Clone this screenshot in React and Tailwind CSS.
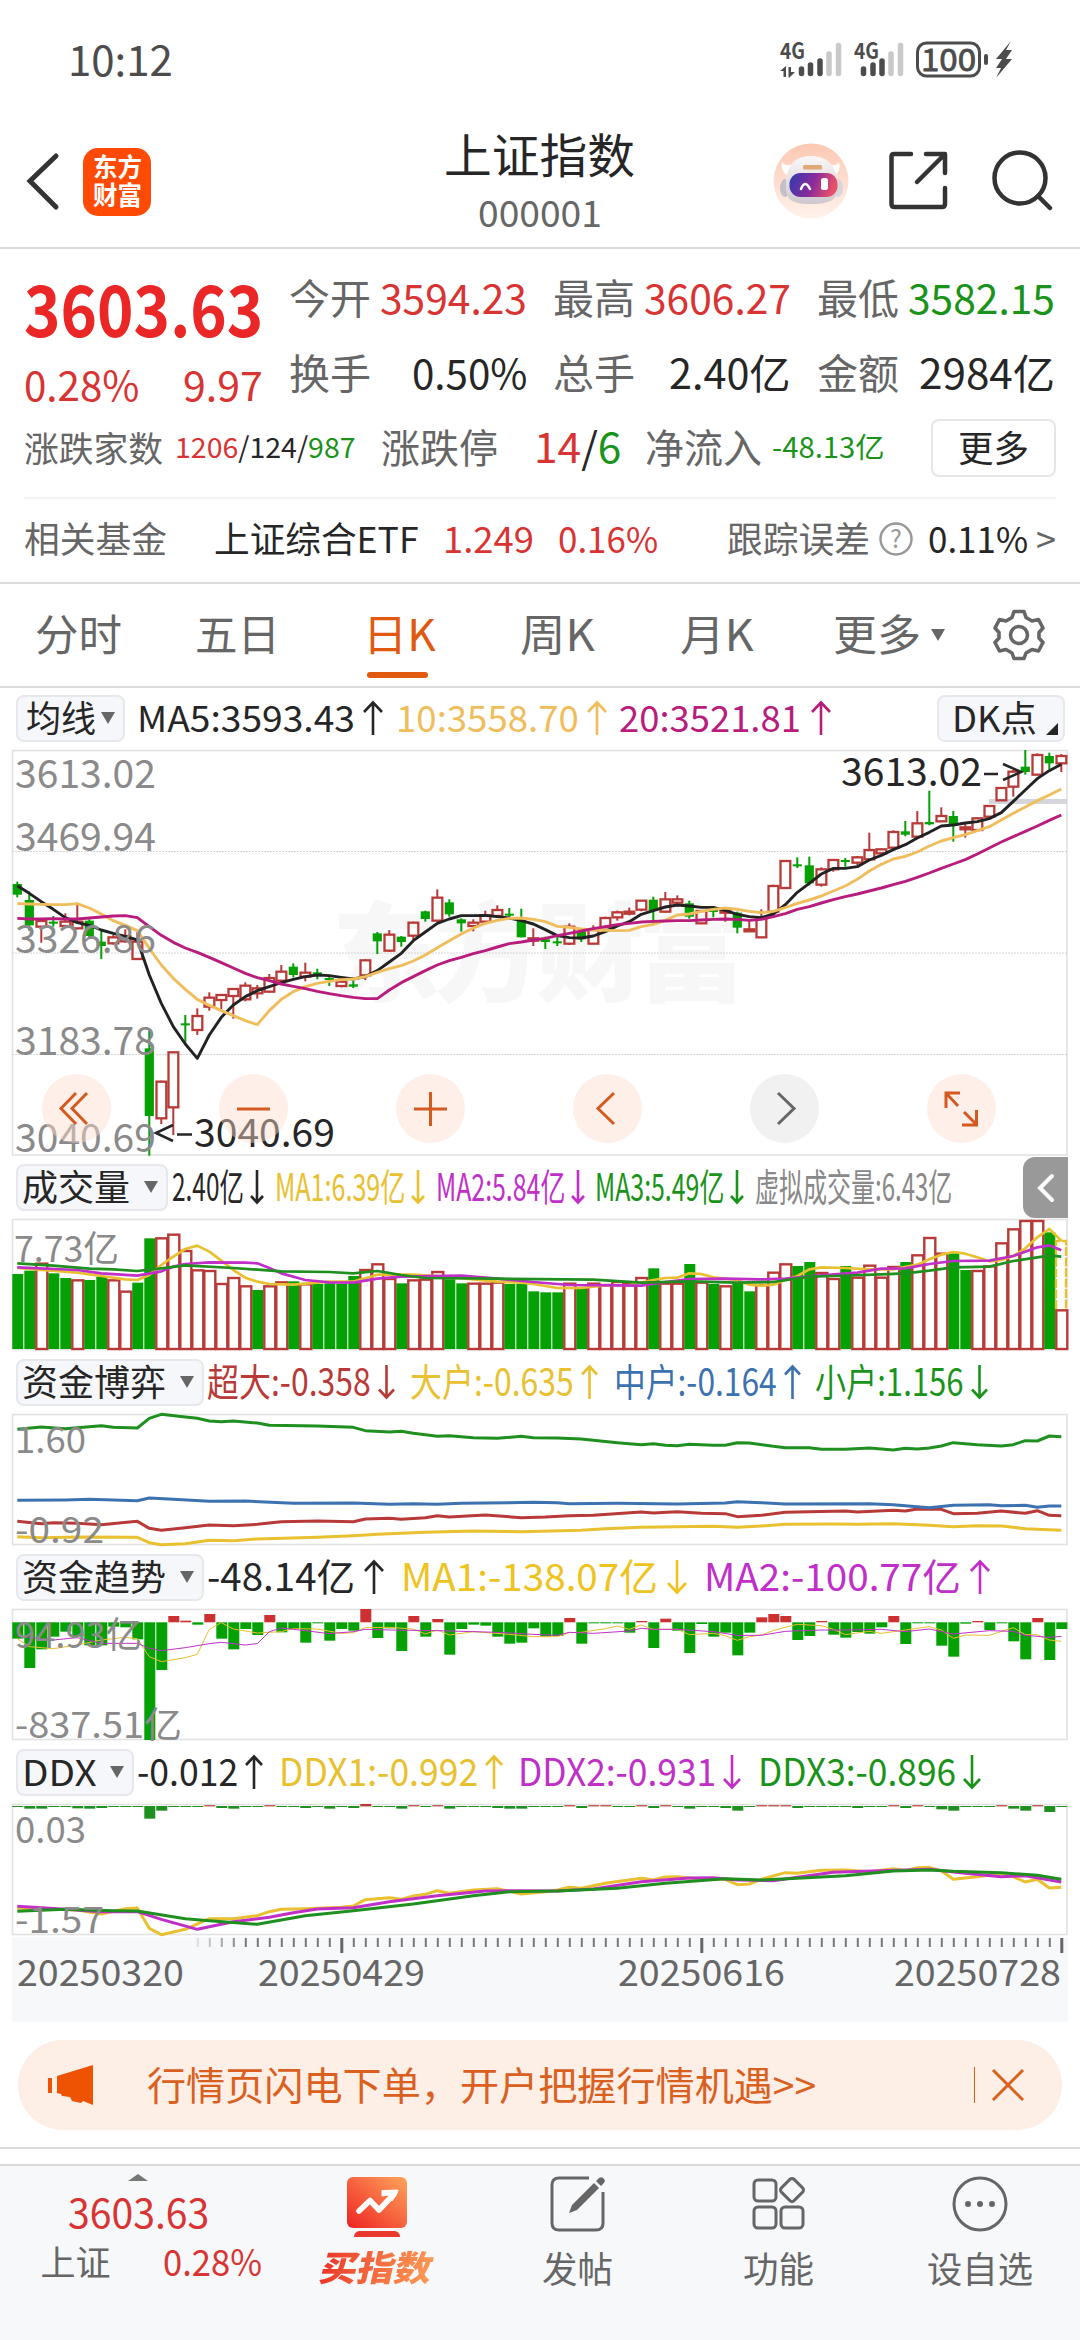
import React, { useLayoutEffect, useRef, useState } from 'react';

const RED = '#b83a38';
const GREEN = '#04a004';
const YELLOW = '#e8c030';
const PURPLE = '#c030c8';
const DEEP_GREEN = '#1f8f1f';
const BLUE = '#3d72b0';

const STEP = 12;
const FIRST_X = 17.3;
const px = (i) => FIRST_X + i * STEP;

// 文字按给定宽度横向压缩，保持一行
const Fit = ({ w, className = '', children }) => {
  const ref = useRef(null);
  const [scale, setScale] = useState(1);

  useLayoutEffect(() => {
    if (ref.current && ref.current.offsetWidth) {
      setScale(w / ref.current.offsetWidth);
    }
  }, [w, children]);

  return (
    <span className={`block shrink-0 leading-none whitespace-nowrap ${className}`} style={{ width: w }}>
      <span
        ref={ref}
        className="inline-block origin-left"
        style={{ transform: `translateY(-0.06em) scaleX(${scale})` }}
      >
        {children}
      </span>
    </span>
  );
};

// [涨跌, 最高, 实体上沿, 实体下沿, 最低]
const candles = [
  ['g', 425, 432, 464, 472], ['g', 455, 480, 556, 572], ['r', 535, 543, 560, 608], ['g', 528, 545, 548, 560],
  ['r', 520, 545, 558, 562], ['r', 492, 545, 565, 568], ['g', 538, 542, 588, 592], ['g', 570, 605, 618, 657],
  ['r', 585, 592, 610, 614], ['r', 568, 588, 604, 608], ['r', 575, 605, 657, 657], ['g', 873, 925, 1128, 1247],
  ['r', 1022, 1025, 1135, 1152], ['r', 935, 937, 1102, 1185], ['g', 825, 850, 856, 908], ['r', 805, 828, 870, 885],
  ['r', 757, 773, 800, 812], ['r', 762, 765, 780, 808], ['r', 745, 747, 768, 836], ['r', 727, 737, 778, 784],
  ['r', 735, 745, 760, 776], ['r', 702, 714, 755, 758], ['r', 675, 695, 722, 725], ['g', 670, 680, 705, 712],
  ['r', 668, 698, 710, 724], ['g', 686, 697, 703, 718], ['g', 710, 714, 720, 738], ['r', 720, 725, 738, 742],
  ['g', 722, 733, 740, 744], ['r', 658, 661, 706, 720], ['g', 576, 580, 604, 642], ['r', 570, 584, 632, 636],
  ['g', 588, 590, 606, 620], ['r', 545, 548, 587, 600], ['g', 512, 514, 537, 545], ['r', 448, 473, 542, 545],
  ['g', 478, 487, 523, 530], ['g', 535, 538, 550, 575], ['r', 538, 548, 558, 574], ['r', 512, 526, 545, 548],
  ['r', 496, 510, 528, 532], ['g', 504, 521, 526, 530], ['g', 506, 540, 592, 592], ['r', 565, 595, 602, 618],
  ['g', 590, 598, 606, 627], ['g', 590, 604, 610, 618], ['r', 550, 560, 611, 615], ['g', 570, 573, 598, 606],
  ['r', 556, 570, 611, 611], ['r', 530, 534, 562, 564], ['r', 512, 517, 532, 542], ['r', 503, 515, 519, 526],
  ['r', 480, 482, 509, 514], ['g', 470, 479, 512, 555], ['r', 456, 478, 515, 518], ['r', 466, 478, 488, 500],
  ['g', 482, 490, 530, 536], ['r', 510, 513, 550, 550], ['g', 498, 508, 516, 532], ['r', 508, 512, 518, 545],
  ['g', 515, 518, 563, 580], ['r', 540, 568, 573, 573], ['r', 508, 536, 592, 594], ['r', 434, 438, 515, 520],
  ['r', 360, 363, 444, 446], ['g', 352, 373, 378, 384], ['g', 350, 376, 430, 436], ['r', 382, 388, 434, 440],
  ['r', 358, 360, 388, 395], ['g', 354, 360, 366, 380], ['r', 348, 352, 368, 375], ['r', 278, 330, 358, 362],
  ['r', 326, 328, 340, 345], ['r', 271, 276, 323, 330], ['g', 243, 274, 284, 289], ['r', 213, 250, 290, 294],
  ['g', 152, 246, 253, 256], ['r', 202, 228, 244, 246], ['g', 213, 228, 256, 305], ['r', 248, 262, 268, 293],
  ['r', 232, 235, 270, 272], ['r', 195, 198, 230, 234], ['r', 142, 144, 181, 183], ['r', 90, 95, 140, 170],
  ['g', 30, 80, 96, 104], ['r', 40, 45, 104, 104], ['g', 38, 48, 70, 88], ['r', 42, 48, 70, 96],
];

const ma5 = [
  437, 460, 485, 508, 533, 548, 556, 570, 580, 589, 600, 705, 790, 860, 912, 955, 885, 832, 795, 770, 752, 740,
  728, 718, 710, 705, 707, 712, 717, 710, 692, 666, 640, 602, 576, 550, 537, 527, 527, 526, 530, 534, 542, 552,
  569, 587, 593, 594, 588, 575, 558, 545, 523, 512, 501, 495, 498, 502, 502, 511, 523, 530, 533, 522, 494, 457,
  430, 402, 385, 385, 380, 360, 346, 329, 314, 294, 277, 258, 255, 249, 245, 236, 218, 184, 150, 116, 92, 73,
];
const ma10 = [
  491, 492, 493, 494, 494, 491, 504, 522, 542, 556, 572, 625, 675, 715, 748, 778, 796, 812, 827, 842, 854, 812,
  778, 755, 740, 730, 724, 719, 717, 710, 697, 686, 677, 663, 645, 623, 602, 582, 564, 550, 541, 535, 534, 538,
  545, 559, 562, 567, 570, 571, 572, 571, 560, 553, 541, 525, 522, 514, 508, 504, 508, 514, 518, 514, 503, 490,
  480, 468, 453, 438, 418, 393, 373, 357, 349, 336, 318, 303, 293, 284, 272, 260, 240, 220, 201, 182, 165, 147,
];
const ma20 = [
  535, 537, 537, 536, 537, 537, 534, 531, 528, 527, 533, 560, 586, 607, 624, 637, 652, 668, 684, 700, 713, 722,
  732, 739, 746, 754, 761, 767, 772, 776, 776, 750, 728, 710, 692, 675, 662, 652, 641, 632, 621, 611, 606, 600,
  595, 587, 580, 573, 566, 560, 554, 550, 546, 544, 543, 542, 542, 540, 538, 537, 538, 541, 538, 530, 521, 508,
  500, 489, 479, 470, 462, 453, 444, 434, 424, 412, 399, 385, 372, 359, 342, 324, 306, 290, 274, 258, 241, 225,
];

const volumes =
  'g372 g362 r338 g370 g384 r388 g390 g380 r388 r422 g398 g265 r262 r251 r300 r358 r360 r399 r381 r406 g420 r406 r394 g394 r400 g402 g400 g402 g378 r357 r340 r384 g400 r388 r386 r363 g388 g400 r398 r398 r395 g402 g402 g424 g427 g427 r398 g412 r398 r402 r393 r398 r381 g355 r398 r398 g342 r395 g402 r406 g398 g424 r402 r365 r340 g348 g336 r366 r384 g348 r380 r344 r380 r348 g336 r313 r261 r308 g310 g360 r360 r346 r277 r235 r210 r210 g247 r478'
    .split(' ')
    .map((s) => [s[0], Number(s.slice(1))]);

const trends =
  'g296 g384 g328 g290 g275 g290 g316 g316 g260 g262 g298 g600 g390 r228 r242 g254 r222 g296 g328 g267 g285 r225 g277 g267 g308 g250 g302 g267 g272 r207 g294 g265 g333 r228 g290 r237 g344 g267 g254 g257 g290 g311 g308 g265 g290 g288 r234 g311 g250 g250 g250 g278 r243 g324 r236 g272 g339 g252 g290 g278 g346 g278 r232 r222 r228 g300 g288 r243 g284 g293 g276 g281 g262 r228 g312 g250 g250 g317 g350 g251 r243 g270 g250 g304 g358 r234 g360 g267'
    .split(' ')
    .map((s) => [s[0], Number(s.slice(1))]);

const ddxDeep = {
  1: 806, 2: 806, 5: 805, 6: 806, 7: 804, 11: 836, 12: 812, 17: 804, 18: 806, 24: 804, 26: 806, 28: 804, 32: 806,
  36: 806, 40: 804, 41: 806, 42: 806, 47: 804, 53: 804, 56: 806, 59: 804, 60: 812, 65: 804, 70: 804, 74: 804,
  77: 808, 78: 812, 83: 806, 84: 812, 86: 816,
};
const ddxUp = [16, 21, 29, 33, 35, 46, 48, 49, 52, 54, 62, 63, 64, 73, 75, 82, 85];

const volumeLines = [
  [YELLOW, '0:354 5:368 7:378 9:388 10:390 11:375 12:345 13:320 14:297 15:287 16:305 17:332 18:360 19:383 20:395 21:402 23:404 26:395 28:395 29:385 30:374 33:374 35:378 38:388 40:395 42:398 43:402 44:408 45:414 47:414 49:406 51:405 53:390 54:384 55:383 56:370 57:372 58:382 60:390 61:404 62:407 63:404 64:390 65:378 66:358 67:352 69:354 71:358 73:358 75:344 76:328 77:314 78:306 79:311 80:322 81:334 82:330 83:318 84:295 85:262 86:237 87:272'],
  [PURPLE, '0:352 5:360 7:370 10:377 12:364 13:350 14:342 16:337 19:338 20:340 21:354 22:370 24:390 26:397 28:398 30:386 32:380 37:377 40:386 43:396 46:405 50:406 52:407 54:396 56:387 59:386 62:388 64:386 67:376 70:368 72:356 74:355 76:342 78:333 81:332 83:318 85:292 86:286 87:301'],
  [DEEP_GREEN, '0:340 3:347 6:356 8:358 10:363 12:355 14:346 18:354 22:364 26:366 28:370 30:363 32:375 34:384 40:386 48:389 52:398 56:394 60:398 63:396 66:380 68:378 72:373 74:370 76:362 78:352 81:350 83:333 85:322 86:317 87:320'],
];
const gameLines = [
  [DEEP_GREEN, '0:838 2:831 4:836 7:827 8:832 10:834 11:805 12:793 14:801 15:805 16:813 17:815 18:813 20:819 21:826 25:828 28:832 29:842 31:846 32:844 33:850 34:854 35:859 36:857 38:863 40:865 42:859 43:863 45:864 47:867 50:878 52:884 53:881 54:886 55:887 56:883 58:886 59:886 60:878 61:879 63:889 64:893 66:893 67:898 69:898 71:894 73:900 74:895 75:897 76:894 77:888 78:878 80:884 82:888 83:884 84:872 85:873 86:858 87:860'],
  [YELLOW, '0:1160 2:1163 5:1161 10:1162 11:1178 12:1184 14:1181 16:1171 18:1172 20:1167 25:1162 28:1157 30:1153 34:1147 38:1143 42:1145 47:1141 49:1136 52:1132 55:1130 58:1129 60:1132 62:1128 64:1123 68:1122 70:1123 73:1121 76:1126 78:1130 80:1127 82:1128 84:1136 87:1141'],
  [RED, '0:1114 2:1121 3:1118 5:1120 7:1124 10:1114 11:1135 12:1141 14:1133 16:1125 18:1127 20:1123 22:1115 25:1113 28:1115 29:1107 31:1105 32:1108 34:1103 35:1097 36:1101 39:1095 42:1103 44:1101 46:1097 48:1096 52:1086 53:1089 55:1085 57:1090 59:1091 60:1100 62:1096 64:1087 66:1085 69:1083 70:1086 73:1081 74:1083 75:1077 77:1078 78:1091 80:1090 82:1083 84:1090 85:1082 86:1096 87:1097'],
  [BLUE, '0:1051 4:1050 6:1048 10:1052 11:1044 13:1048 16:1054 19:1053 23:1060 28:1059 31:1063 33:1061 35:1063 37:1060 43:1057 45:1058 46:1061 50:1060 55:1062 59:1059 60:1055 62:1058 64:1062 71:1061 73:1064 75:1070 76:1073 78:1066 81:1064 82:1067 84:1066 85:1072 86:1068 87:1068'],
];
const trendLines = [
  [YELLOW, '0:296 1:320 3:326 5:315 7:300 9:292 10:296 11:350 12:365 14:353 15:343 16:268 17:248 18:267 20:279 22:275 23:266 25:267 27:280 28:278 29:263 31:262 33:267 34:282 35:270 36:285 38:275 41:283 43:290 45:290 46:278 47:277 49:266 50:258 51:268 52:255 53:268 55:268 56:284 58:280 59:287 60:301 61:290 62:285 63:272 64:262 65:253 67:257 68:268 69:284 71:274 72:280 74:270 76:260 77:270 78:295 79:285 81:286 83:263 84:284 85:284 86:300 87:304'],
  [PURPLE, '0:288 3:300 5:293 7:310 10:310 11:325 12:332 14:323 16:311 17:307 19:315 20:311 21:275 22:264 24:272 26:281 28:275 29:268 31:270 35:272 40:277 43:283 45:286 46:277 48:280 51:273 52:265 53:268 55:268 58:275 60:286 62:286 64:274 67:270 69:270 72:268 74:275 76:267 78:282 81:272 83:274 84:286 86:292 87:289'],
];
const ddxLines = [
  [YELLOW, '0:1105 5:1110 7:1122 9:1106 10:1104 11:1165 12:1184 14:1168 16:1136 18:1136 20:1127 21:1115 22:1108 24:1106 27:1102 28:1098 29:1079 31:1073 32:1078 33:1068 34:1063 35:1052 36:1060 38:1050 40:1046 42:1062 44:1055 45:1050 46:1042 47:1045 49:1030 52:1015 53:1020 54:1011 55:1010 57:1018 59:1018 60:1034 61:1032 62:1018 64:998 65:1000 67:991 69:990 71:995 73:986 74:992 75:983 76:982 77:992 78:1018 80:1010 82:1000 83:1010 84:1026 85:1018 86:1044 87:1042'],
  [PURPLE, '0:1099 4:1108 7:1115 10:1115 12:1138 15:1168 18:1145 21:1132 23:1118 25:1107 28:1103 31:1085 35:1067 39:1053 42:1052 45:1053 48:1047 52:1025 56:1014 58:1013 60:1020 63:1022 65:1012 68:997 72:992 76:988 79:1000 82:1010 84:1007 87:1026'],
  [DEEP_GREEN, '0:1114 4:1108 8:1112 10:1113 14:1136 16:1142 20:1153 24:1127 28:1112 33:1092 38:1067 41:1055 45:1053 50:1045 54:1030 59:1016 62:1020 65:1015 69:1007 73:993 76:990 78:994 82:998 85:1006 87:1018'],
];

const linePoints = (spec, top) =>
  spec
    .split(' ')
    .map((p) => p.split(':').map(Number))
    .map(([i, v]) => `${px(i)},${(v - top) / 3}`)
    .join(' ');

const Lines = ({ lines, top, width = 3 }) =>
  lines.map(([color, spec]) => (
    <polyline key={spec} points={linePoints(spec, top)} fill="none" stroke={color} strokeWidth={width} strokeLinejoin="round" />
  ));

const AxisText = ({ x, y, w, size = 36, color = '#8a8a8a', children }) => (
  <text x={x} y={y} textLength={w} lengthAdjust="spacingAndGlyphs" fontSize={size} fill={color}>
    {children}
  </text>
);

const Frame = ({ height }) => (
  <rect x="12.5" y="0.5" width="1054.5" height={height} fill="none" stroke="#e2e2e2" strokeWidth="1.6" />
);

const KLineChart = () => {
  const y = (v) => (v - 30) / 3;
  const path = (arr) => arr.map((v, i) => `${px(i)},${y(v)}`).join(' ');
  return (
    <svg width="1080" height="405" viewBox="0 0 1080 405" className="block overflow-visible">
      <text x="332" y="243" textLength="414" fontSize="108" fontWeight="900" fill="#f7f7f7">东方财富</text>
      <Frame height={404.5} />
      {[101.5, 203, 304.5].map((gy) => (
        <line key={gy} x1="12" x2="1067" y1={gy} y2={gy} stroke="#d4d4d4" strokeDasharray="2 1" />
      ))}
      <rect x="989" y="49" width="78" height="5" fill="#d4d6db" />
      {candles.map(([kind, high, top, bottom, low], i) => {
        const h = Math.max((bottom - top) / 3, 2);
        if (kind === 'g') {
          return (
            <g key={i} fill={GREEN}>
              <rect x={px(i) - 1} y={y(high)} width="2" height={(low - high) / 3} />
              <rect x={px(i) - 4.6} y={y(top)} width="9.2" height={h} />
            </g>
          );
        }
        return (
          <g key={i} fill={RED}>
            <rect x={px(i) - 1} y={y(high)} width="2" height={(top - high) / 3} />
            <rect x={px(i) - 1} y={y(bottom)} width="2" height={(low - bottom) / 3} />
            <rect x={px(i) - 4.8} y={y(top)} width="9.8" height={h} fill="none" stroke={RED} strokeWidth="2.3" />
          </g>
        );
      })}
      <polyline points={path(ma5)} fill="none" stroke="#222222" strokeWidth="2.9" strokeLinejoin="round" />
      <polyline points={path(ma10)} fill="none" stroke="#f0bd5c" strokeWidth="2.9" strokeLinejoin="round" />
      <polyline points={path(ma20)} fill="none" stroke="#b81c7c" strokeWidth="2.9" strokeLinejoin="round" />
      <AxisText x={15} y={38} w={141} size={39}>3613.02</AxisText>
      <AxisText x={15} y={101} w={141} size={39}>3469.94</AxisText>
      <AxisText x={15} y={203} w={141} size={39}>3326.86</AxisText>
      <AxisText x={15} y={305} w={141} size={39}>3183.78</AxisText>
      <AxisText x={15} y={402} w={141} size={39}>3040.69</AxisText>
      <AxisText x={194} y={397} w={141} size={39} color="#262626">3040.69</AxisText>
      <path d="M173 375 L156 383 L173 391 M177 384.5 H192" fill="none" stroke="#262626" strokeWidth="2.6" />
      <AxisText x={841} y={36} w={141} size={39} color="#262626">3613.02</AxisText>
      <path d="M984 24 H998 M1003 14 L1021 22 L1003 30" fill="none" stroke="#262626" strokeWidth="2.6" />
    </svg>
  );
};

const controls = [
  { key: 'fast', d: 'M34 19 L19 34.5 L34 50 M45 19 L30 34.5 L45 50' },
  { key: 'minus', d: 'M18 35 H51' },
  { key: 'plus', d: 'M18 35 H51 M34.5 18 V52' },
  { key: 'prev', d: 'M41 19 L25 34.5 L41 50' },
  { key: 'next', d: 'M28 19 L44 34.5 L28 50', muted: true },
  { key: 'full', d: 'M33 19 H19 V34 M19 19 L31 32 M37 38 L49 50 M35 51 H49.5 V36' },
];

const ChartControls = () => (
  <div className="absolute top-[324px] left-[42px] flex gap-[108px]">
    {controls.map(({ key, d, muted }) => (
      <button
        key={key}
        className={`h-[69px] w-[69px] rounded-full ${muted ? 'bg-[#f0f0f0]/90' : 'bg-[#fcdccb]/45'}`}
      >
        <svg width="69" height="69" viewBox="0 0 69 69" fill="none" stroke={muted ? '#666666' : '#d35b22'} strokeWidth="3">
          <path d={d} />
        </svg>
      </button>
    ))}
  </div>
);

const VolumeChart = () => {
  const y = (v) => (v - 207) / 3;
  return (
    <svg width="1080" height="131" viewBox="0 0 1080 131" className="block overflow-visible">
      <Frame height={130} />
      {volumes.map(([kind, top], i) =>
        kind === 'g' ? (
          <rect key={i} x={px(i) - 5} y={y(top)} width="11" height={130 - y(top)} fill={GREEN} />
        ) : (
          <rect key={i} x={px(i) - 5} y={y(top) + 1} width="11" height={129 - y(top)} fill="white" stroke={RED} strokeWidth="2.4" />
        )
      )}
      <path d="M1056 90 V22 H1066 V90" fill="none" stroke={YELLOW} strokeWidth="2.4" strokeDasharray="9 1.5" />
      <Lines lines={volumeLines} top={207} width={2.7} />
      <AxisText x={14} y={43} w={105}>7.73亿</AxisText>
    </svg>
  );
};

const GameChart = () => (
  <svg width="1080" height="131" viewBox="0 0 1080 131" className="block overflow-visible">
    <Frame height={130} />
    <Lines lines={gameLines} top={792} />
    <AxisText x={15} y={39} w={71}>1.60</AxisText>
    <AxisText x={15} y={129} w={89}>-0.92</AxisText>
  </svg>
);

const TrendChart = () => (
  <svg width="1080" height="131" viewBox="0 0 1080 131" className="block overflow-visible">
    <Frame height={130} />
    {trends.map(([kind, v], i) => {
      const zero = 13.3;
      const end = (v - 207) / 3;
      return (
        <rect
          key={i}
          x={px(i) - 5}
          y={Math.min(zero, end)}
          width="11"
          height={Math.max(Math.abs(end - zero), 1)}
          fill={kind === 'g' ? GREEN : '#cc3030'}
        />
      );
    })}
    <Lines lines={trendLines} top={207} width={1} />
    <AxisText x={15} y={39} w={127}>94.93亿</AxisText>
    <AxisText x={15} y={129} w={167}>-837.51亿</AxisText>
  </svg>
);

const DdxChart = () => (
  <svg width="1080" height="131" viewBox="0 0 1080 131" className="block overflow-visible">
    <Frame height={130} />
    {candles.map((_, i) => {
      if (ddxUp.includes(i)) {
        const h = i === 29 ? 2.4 : 1.2;
        return <rect key={i} x={px(i) - 5} y={2.4 - h} width="11" height={h} fill={RED} />;
      }
      const end = ((ddxDeep[i] || 801) - 792) / 3;
      return <rect key={i} x={px(i) - 5} y="2" width="11" height={Math.max(end - 2, 1)} fill={DEEP_GREEN} />;
    })}
    <Lines lines={ddxLines} top={792} />
    <AxisText x={15} y={39} w={71}>0.03</AxisText>
    <AxisText x={15} y={129} w={89}>-1.57</AxisText>
  </svg>
);

const Caret = ({ className = 'ml-[14px]' }) => (
  <svg width="14" height="12" viewBox="0 0 14 12" className={`shrink-0 ${className}`}>
    <path d="M0 0 H14 L7 12 Z" fill="#666666" />
  </svg>
);

// 涨跌箭头
const Arrow = ({ dir, w = 20, className = '' }) => (
  <svg
    width={w}
    height="36"
    viewBox={`0 0 ${w} 36`}
    fill="none"
    stroke="currentColor"
    strokeWidth="2.6"
    className={`shrink-0 ${className}`}
  >
    <path
      d={
        dir === 'up'
          ? `M${w / 2} 35 V3 M1 ${w / 2 + 2} L${w / 2} 2.500 L${w - 1} ${w / 2 + 2}`
          : `M${w / 2} 1 V33 M1 ${34 - w / 2} L${w / 2} 33.500 L${w - 1} ${34 - w / 2}`
      }
    />
  </svg>
);

// 指标标题行：下拉按钮 + 各项数值
const IndicatorBar = ({ label, labelWidth, values, first }) => (
  <div className="flex h-[64px] items-center pl-4 text-[38px]">
    <div className="flex h-[47px] shrink-0 items-center rounded-lg border-2 border-[#e6e8ed] bg-[#f6f7fa] pr-[8px] pl-[4px] text-[#262626]">
      <Fit w={labelWidth} className="text-[36px]">{label}</Fit>
      <Caret />
    </div>
    <div className={`flex items-center ${first}`}>
      {values.map(({ text, w, color, arrow, gap = 'mr-[7px]', after = 'mr-[12px]', aw = 20 }) => (
        <div key={text} className={`flex items-center ${color} ${after}`}>
          <Fit w={w} className={gap}>{text}</Fit>
          {arrow && <Arrow dir={arrow} w={aw} />}
        </div>
      ))}
    </div>
  </div>
);

const BLACK_T = 'text-[#262626]';
const YELLOW_T = 'text-[#e8c030]';
const PURPLE_T = 'text-[#c030c8]';
const GREEN_T = 'text-[#1a931a]';

const StatusBar = () => (
  <header className="flex h-[120px] items-start justify-between pt-[39px] pr-[64px] pl-[68px] text-[#4c4c4c]">
    <Fit w={105} className="mt-[1px] text-[42px]">10:12</Fit>
    <svg width="236" height="42" viewBox="0 0 236 42" fill="#4c4c4c" className="overflow-visible">
      <text x="0" y="20" fontSize="22" fontWeight="700" textLength="25" lengthAdjust="spacingAndGlyphs">4G</text>
      <path d="M0 32 L6 27 V38 H3.5 V32 Z M8.5 28 H11 V33 H15 L9.5 38.5 H8.5 Z" />
      <g strokeWidth="5.5" strokeLinecap="round" stroke="#4c4c4c">
        <path d="M21.5 30 V34.500 M30.5 26 V34.500 M40 22 V34.500 M83.5 30 V34.500 M93 26 V34.500 M102 22 V34.500" />
        <path d="M49 15 V34.500 M58.5 6.500 V34.500 M111 15 V34.500 M120.5 6.500 V34.500" stroke="#c9c9c9" />
      </g>
      <text x="74" y="20" fontSize="22" fontWeight="700" textLength="25" lengthAdjust="spacingAndGlyphs">4G</text>
      <rect x="137.5" y="4" width="62" height="33" rx="9" fill="none" stroke="#4c4c4c" strokeWidth="3" />
      <text x="141" y="32" fontSize="31" stroke="#4c4c4c" strokeWidth="0.8" textLength="55" lengthAdjust="spacingAndGlyphs">100</text>
      <rect x="204" y="15" width="4" height="11" rx="2" />
      <path d="M231 2 L216 20 H222 L216 29 H221 L216 39 L232 20 H226 L232 11 H226 Z" />
    </svg>
  </header>
);

const Robot = () => (
  <svg width="76" height="76" viewBox="0 0 76 76">
    <defs>
      <linearGradient id="halo" x1="0" y1="0" x2="0" y2="1">
        <stop offset="0" stopColor="#fdc8b2" />
        <stop offset="1" stopColor="#fff3ec" />
      </linearGradient>
      <linearGradient id="visor" x1="0" y1="0" x2="1" y2="0.2">
        <stop offset="0" stopColor="#2f3bb0" />
        <stop offset="0.55" stopColor="#8a2a9a" />
        <stop offset="1" stopColor="#e8506a" />
      </linearGradient>
      <linearGradient id="shell" x1="0" y1="0" x2="0" y2="1">
        <stop offset="0" stopColor="#fbf8f8" />
        <stop offset="1" stopColor="#cdc8ce" />
      </linearGradient>
    </defs>
    <circle cx="38" cy="38" r="37.5" fill="url(#halo)" />
    <path d="M9 19 Q12 24 22 21 L15 33 Q7 28 9 19 Z M66 19 Q64 24 54 21 L61 33 Q69 28 66 19 Z" fill="#ffffff" />
    <ellipse cx="12" cy="45" rx="5" ry="9" fill="#c4c0c8" />
    <ellipse cx="65" cy="45" rx="5" ry="9" fill="#d9d5da" />
    <path d="M38 13 C54 13 63 22 65 40 C66 56 59 61 38 61 C17 61 12 56 13 40 C14 22 22 13 38 13 Z" fill="url(#shell)" />
    <rect x="30" y="22" width="19" height="4.500" rx="1.5" fill="#e0a878" />
    <rect x="16.5" y="30" width="48" height="24" rx="11" fill="url(#visor)" />
    <path d="M28 46 Q32 36 37 46" fill="none" stroke="white" strokeWidth="2.5" strokeLinecap="round" />
    <rect x="48" y="35" width="7" height="12" rx="2.5" fill="white" />
  </svg>
);

const TitleBar = () => (
  <div className="flex h-[129px] items-start justify-between border-b-2 border-[#dcdcdc] pr-[27px] pl-[26px]">
    <div className="flex w-[400px] items-center pt-[28px]">
      <svg width="36" height="62" viewBox="0 0 36 62" fill="none" stroke="#333333" strokeWidth="5" strokeLinecap="round">
        <path d="M30 5 L4 30 L30 56" />
      </svg>
      <div className="ml-[21px] flex h-[68px] w-[68px] flex-col items-center justify-center gap-[2px] rounded-[15px] bg-[#ff4a05] text-[26px] font-bold text-white">
        <Fit w={49}>东方</Fit>
        <Fit w={49}>财富</Fit>
      </div>
    </div>
    <div className="flex flex-col items-center pt-[12px]">
      <Fit w={191} className="text-[47px] text-[#262626]">上证指数</Fit>
      <Fit w={124} className="mt-[16px] text-[36px] text-[#666666]">000001</Fit>
    </div>
    <div className="flex w-[400px] items-center justify-end pt-[23px]">
      <Robot />
      <svg width="60" height="60" viewBox="0 0 60 60" fill="none" stroke="#333333" strokeWidth="4.5" strokeLinecap="round" strokeLinejoin="round" className="ml-[40px]">
        <path d="M22 3 H5 Q2.5 3 2.5 5.500 V53 Q2.5 56 5.5 56 H53 Q56 56 56 53 V37 M37 3 H56 V22 M55 4 L28 31" />
      </svg>
      <svg width="62" height="62" viewBox="0 0 62 62" fill="none" stroke="#333333" strokeWidth="4.5" strokeLinecap="round" className="ml-[42px]">
        <circle cx="29" cy="28" r="25.5" />
        <path d="M47 46 L59 58" />
      </svg>
    </div>
  </div>
);

const Stat = ({ label, value, w, color }) => (
  <div className="flex w-[238px] items-center justify-between">
    <Fit w={82} className="text-[41px] text-[#666666]">{label}</Fit>
    <Fit w={w} className={`text-[41px] ${color}`}>{value}</Fit>
  </div>
);

const Quote = () => (
  <section className="flex h-[333px] flex-col px-[24px]">
    <div className="flex h-[163px]">
      <div className="flex w-[265px] flex-col pt-[26px]">
        <Fit w={239} className="text-[71px] font-bold text-[#eb2626]">3603.63</Fit>
        <div className="mt-[19px] flex w-[239px] justify-between text-[41px] text-[#d83434]">
          <Fit w={115}>0.28%</Fit>
          <Fit w={80}>9.97</Fit>
        </div>
      </div>
      <div className="flex flex-col gap-[34px] pt-[29px]">
        <div className="flex gap-[26px]">
          <Stat label="今开" value="3594.23" w={147} color="text-[#d83434]" />
          <Stat label="最高" value="3606.27" w={147} color="text-[#d83434]" />
          <Stat label="最低" value="3582.15" w={147} color={GREEN_T} />
        </div>
        <div className="flex gap-[26px]">
          <Stat label="换手" value="0.50%" w={115} color={BLACK_T} />
          <Stat label="总手" value="2.40亿" w={122} color={BLACK_T} />
          <Stat label="金额" value="2984亿" w={136} color={BLACK_T} />
        </div>
      </div>
    </div>
    <div className="flex h-[87px] items-start border-b-2 border-[#f4f4f4] pt-[7px]">
      <div className="flex h-[58px] items-center text-[#666666]">
        <Fit w={139} className="text-[35px]">涨跌家数</Fit>
        <Fit w={181} className="ml-[12px] text-[28.5px] text-[#262626]">
          <span className="text-[#d83434]">1206</span>/124/<span className={GREEN_T}>987</span>
        </Fit>
        <Fit w={117} className="ml-[25px] text-[40px]">涨跌停</Fit>
        <Fit w={87} className="ml-[36px] text-[42px] text-[#262626]">
          <span className="text-[#d83434]">14</span>/<span className={GREEN_T}>6</span>
        </Fit>
        <Fit w={117} className="ml-[24px] text-[40px]">净流入</Fit>
        <Fit w={113} className={`ml-[10px] text-[28px] ${GREEN_T}`}>-48.13亿</Fit>
      </div>
      <button className="ml-auto flex h-[58px] w-[125px] items-center justify-center rounded-lg border-2 border-[#e6e6e6] text-[#262626]">
        <Fit w={71} className="text-[36px]">更多</Fit>
      </button>
    </div>
    <div className="flex flex-1 items-center pb-[4px] text-[36px] text-[#666666]">
      <Fit w={143}>相关基金</Fit>
      <Fit w={205} className={`ml-[47px] ${BLACK_T}`}>上证综合ETF</Fit>
      <Fit w={91} className="ml-[24px] text-[#d83434]">1.249</Fit>
      <Fit w={100} className="ml-[24px] text-[#d83434]">0.16%</Fit>
      <Fit w={143} className="ml-[69px]">跟踪误差</Fit>
      <svg width="34" height="34" viewBox="0 0 34 34" className="ml-[9px] overflow-visible">
        <circle cx="17" cy="17" r="15.5" fill="none" stroke="#999999" strokeWidth="2.5" />
        <text x="17" y="26" fontSize="25" textAnchor="middle" fill="#999999">?</text>
      </svg>
      <Fit w={100} className={`ml-[15px] ${BLACK_T}`}>0.11%</Fit>
      <Fit w={20} className="ml-[8px]">&gt;</Fit>
    </div>
  </section>
);

const Tabs = () => (
  <nav className="flex h-[106px] items-center border-y-2 border-[#dcdcdc] pl-[35px] text-[43px] text-[#666666]">
    <Fit w={87}>分时</Fit>
    <Fit w={85} className="ml-[73px]">五日</Fit>
    <div className="relative ml-[83px] text-[#e0590f]">
      <Fit w={73}>日K</Fit>
      <span className="absolute top-[58px] left-[4px] h-[6px] w-[61px] rounded-full bg-[#e0590f]" />
    </div>
    <Fit w={75} className="ml-[84px]">周K</Fit>
    <Fit w={74} className="ml-[85px]">月K</Fit>
    <Fit w={88} className="ml-[79px]">更多</Fit>
    <Caret className="ml-[10px]" />
    <svg width="54" height="54" viewBox="0 0 54 54" fill="none" stroke="#666666" strokeWidth="3.6" strokeLinejoin="round" className="ml-[47px]">
      <path d="M22 3.5 H32 L34 9.5 L40 13 L46.5 11.5 L51 20 L47 24.5 V30 L51 34.5 L46.5 43 L40 41.5 L34 45 L32 50.5 H22 L20 45 L14 41.5 L7.5 43 L3 34.5 L7 30 V24.5 L3 20 L7.5 11.5 L14 13 L20 9.5 Z" />
      <circle cx="27" cy="27" r="8.5" />
    </svg>
  </nav>
);

const AverageBar = () => (
  <div className="flex h-[63px] items-center pr-[15px] pb-[3px] pl-4 text-[36px]">
    <div className="flex h-[47px] w-[109px] shrink-0 items-center rounded-lg border-2 border-[#e6e8ed] bg-[#f6f7fa] pl-[8px] text-[#262626]">
      <Fit w={70}>均线</Fit>
      <Caret className="ml-[5px]" />
    </div>
    <Fit w={218} className="ml-[12px] text-[#262626]">MA5:3593.43</Fit>
    <Arrow dir="up" w={20} className="ml-[8px] text-[#262626]" />
    <Fit w={183} className="ml-[13px] text-[#f0bd5c]">10:3558.70</Fit>
    <Arrow dir="up" w={20} className="ml-[8px] text-[#f0bd5c]" />
    <Fit w={182} className="ml-[12px] text-[#b81c7c]">20:3521.81</Fit>
    <Arrow dir="up" w={20} className="ml-[10px] text-[#b81c7c]" />
    <div className="ml-auto flex h-[47px] w-[128px] items-center rounded-lg border-2 border-[#e6e8ed] bg-[#f6f7fa] pl-[13px] text-[#262626]">
      <Fit w={85}>DK点</Fit>
      <svg width="12" height="12" viewBox="0 0 12 12" className="mt-[22px] ml-[9px]">
        <path d="M12 0 V12 H0 Z" fill="#262626" />
      </svg>
    </div>
  </div>
);

const ticks = Array.from({ length: 73 }, (_, n) => n + 15);
const majorTicks = [27, 57, 87];

const DateAxis = () => (
  <div className="ml-[12px] w-[1056px] bg-[#f7f8fa]">
    <svg width="1056" height="85" viewBox="12 0 1056 85" className="block">
      {ticks.map((i) => {
        const major = majorTicks.includes(i);
        return (
          <rect
            key={i}
            x={px(i) - (major ? 1 : 0.5)}
            y="1"
            width={major ? 3 : 2}
            height={major ? 15 : 9}
            fill={major ? '#666666' : '#777777'}
            opacity={Math.min(1, (i - 14) / 5)}
          />
        );
      })}
      <AxisText x={17} y={49} w={167} color="#666666">20250320</AxisText>
      <AxisText x={258} y={49} w={167} color="#666666">20250429</AxisText>
      <AxisText x={618} y={49} w={167} color="#666666">20250616</AxisText>
      <AxisText x={894} y={49} w={167} color="#666666">20250728</AxisText>
    </svg>
  </div>
);

const Banner = () => (
  <div className="mx-[18px] mt-[18px] flex h-[90px] items-center rounded-full bg-[#fdeee6] pr-[37px] pl-[30px] text-[#d9601f]">
    <svg width="46" height="42" viewBox="0 0 46 42" fill="#ee5203">
      <path d="M0 14 H4 V29 H0 Z M9 12 L45 1 V41 L35 37 L33 39 L24 37 L22 33 L14 32 L13 30 L9 29 Z" />
    </svg>
    <Fit w={669} className="ml-[53px] text-[39px]">行情页闪电下单，开户把握行情机遇&gt;&gt;</Fit>
    <div className="ml-auto h-[36px] w-[1.5px] bg-[#d9601f]" />
    <svg width="34" height="34" viewBox="0 0 34 34" fill="none" stroke="#d9601f" strokeWidth="3" className="ml-[16px]">
      <path d="M2 2 L32 32 M32 2 L2 32" />
    </svg>
  </div>
);

const NavItem = ({ label, w, children }) => (
  <div className="flex w-[201px] flex-col items-center pt-[10px]">
    <div className="flex h-[60px] items-start">{children}</div>
    <Fit w={w} className="mt-[15px] text-[36px] text-[#666666]">{label}</Fit>
  </div>
);

const BottomNav = () => (
  <footer className="flex h-[176px] border-t-2 border-[#d9dadc] bg-[#f6f8fa]">
    <div className="flex w-[277px] flex-col items-center pt-[8px] text-[#d83434]">
      <svg width="20" height="7" viewBox="0 0 20 7">
        <path d="M10 0 L20 7 H0 Z" fill="#777777" />
      </svg>
      <Fit w={141} className="mt-[12px] text-[40px]">3603.63</Fit>
      <div className="mt-[11px] ml-[26px] flex items-center gap-[53px]">
        <Fit w={70} className="text-[35px] text-[#666666]">上证</Fit>
        <Fit w={99} className="text-[37px]">0.28%</Fit>
      </div>
    </div>
    <div className="flex w-[201px] flex-col items-center pt-[11px]">
      <svg width="62" height="62" viewBox="0 0 62 62">
        <defs>
          <linearGradient id="hot" x1="0" y1="1" x2="1" y2="0">
            <stop offset="0" stopColor="#ee2222" />
            <stop offset="1" stopColor="#ffa55c" />
          </linearGradient>
        </defs>
        <rect x="1" y="0" width="60" height="51" rx="6" fill="url(#hot)" />
        <path d="M13 54 H49 Q54 55 54 60 H8 Q8 55 13 54 Z" fill="#ea3a2e" />
        <path d="M13 34 L24 23.5 L33 33 L48 17" fill="none" stroke="white" strokeWidth="5.5" strokeLinecap="round" strokeLinejoin="round" />
        <path d="M36 13.5 L52 13 Q52 16 46 24 L42 18 L36 19 Z" fill="white" stroke="white" strokeWidth="1" />
      </svg>
      <Fit w={112} className="mt-[11px] text-[35px] font-black">
        <span className="inline-block -skew-x-12 bg-gradient-to-r from-[#ea3228] to-[#fb9a56] bg-clip-text pb-1 text-transparent">买指数</span>
      </Fit>
    </div>
    <NavItem label="发帖" w={71}>
      <svg width="58" height="56" viewBox="0 0 58 56" fill="none" stroke="#666666" strokeWidth="3">
        <path d="M40 2 H10 Q3 2 3 9 V47 Q3 54 10 54 H47 Q54 54 54 47 V16" />
        <path d="M20 37 L23 29 L45 7 L50 12 L28 34 Z" fill="#666666" stroke="none" />
        <path d="M47 5 L50 2 Q53 0 55 3 Q57 5 54 8 L52 10 Z" fill="#666666" stroke="none" />
      </svg>
    </NavItem>
    <NavItem label="功能" w={71}>
      <svg width="54" height="56" viewBox="0 0 54 56" fill="none" stroke="#666666" strokeWidth="3" strokeLinejoin="round">
        <rect x="2" y="4" width="22" height="21" rx="4" />
        <rect x="2" y="31" width="22" height="21" rx="4" />
        <rect x="29" y="31" width="22" height="21" rx="4" />
        <rect x="31" y="5" width="18" height="18" rx="3" transform="rotate(45 40 14)" />
      </svg>
    </NavItem>
    <NavItem label="设自选" w={106}>
      <svg width="56" height="56" viewBox="0 0 56 56" fill="none" stroke="#666666" strokeWidth="3">
        <circle cx="28" cy="28" r="26" />
        <g fill="#666666" stroke="none">
          <circle cx="16" cy="28" r="3" />
          <circle cx="28" cy="28" r="3" />
          <circle cx="40" cy="28" r="3" />
        </g>
      </svg>
    </NavItem>
  </footer>
);

const App = () => (
  <div className="h-[2340px] w-[1080px] overflow-hidden bg-white font-['Noto_Sans_CJK_SC',sans-serif]">
    <StatusBar />
    <TitleBar />
    <Quote />
    <Tabs />
    <AverageBar />
    <div className="relative -mt-[1px]">
      <KLineChart />
      <ChartControls />
      <button className="absolute top-[407px] right-[12px] flex h-[61px] w-[45px] items-center justify-center rounded-l-xl bg-[#999999]">
        <svg width="18" height="30" viewBox="0 0 18 30" fill="none" stroke="white" strokeWidth="4" strokeLinecap="round">
          <path d="M15 3 L3 15 L15 27" />
        </svg>
      </button>
    </div>
    <IndicatorBar
      label="成交量"
      labelWidth={108}
      first="ml-[4px]"
      values={[
        { text: '2.40亿', w: 72, color: BLACK_T, arrow: 'down', aw: 14, gap: 'mr-[6px]', after: 'mr-[11px]' },
        { text: 'MA1:6.39亿', w: 130, color: YELLOW_T, arrow: 'down', aw: 14, gap: 'mr-[6px]', after: 'mr-[11px]' },
        { text: 'MA2:5.84亿', w: 129, color: PURPLE_T, arrow: 'down', aw: 14, gap: 'mr-[6px]', after: 'mr-[10px]' },
        { text: 'MA3:5.49亿', w: 129, color: GREEN_T, arrow: 'down', aw: 14, gap: 'mr-[6px]', after: 'mr-[11px]' },
        { text: '虚拟成交量:6.43亿', w: 197, color: 'text-[#888888]' },
      ]}
    />
    <VolumeChart />
    <IndicatorBar
      label="资金博弈"
      labelWidth={144}
      first="ml-[3px]"
      values={[
        { text: '超大:-0.358', w: 164, color: 'text-[#b83a38]', arrow: 'down', aw: 17, gap: 'mr-[7px]', after: 'mr-[15px]' },
        { text: '大户:-0.635', w: 164, color: YELLOW_T, arrow: 'up', aw: 17, gap: 'mr-[7px]', after: 'mr-[16px]' },
        { text: '中户:-0.164', w: 163, color: 'text-[#3d72b0]', arrow: 'up', aw: 17, gap: 'mr-[7px]', after: 'mr-[14px]' },
        { text: '小户:1.156', w: 149, color: GREEN_T, arrow: 'down', aw: 17 },
      ]}
    />
    <GameChart />
    <IndicatorBar
      label="资金趋势"
      labelWidth={144}
      first="ml-[3px]"
      values={[
        { text: '-48.14亿', w: 148, color: BLACK_T, arrow: 'up', gap: 'mr-[9px]', after: 'mr-[17px]' },
        { text: 'MA1:-138.07亿', w: 257, color: 'text-[#eec31e]', arrow: 'down', gap: 'mr-[9px]', after: 'mr-[17px]' },
        { text: 'MA2:-100.77亿', w: 257, color: PURPLE_T, arrow: 'up', gap: 'mr-[9px]' },
      ]}
    />
    <TrendChart />
    <IndicatorBar
      label="DDX"
      labelWidth={74}
      first="ml-[3px]"
      values={[
        { text: '-0.012', w: 101, color: BLACK_T, arrow: 'up', aw: 18, after: 'mr-[16px]' },
        { text: 'DDX1:-0.992', w: 199, color: YELLOW_T, arrow: 'up', aw: 18, after: 'mr-[15px]' },
        { text: 'DDX2:-0.931', w: 198, color: PURPLE_T, arrow: 'down', aw: 18, after: 'mr-[17px]' },
        { text: 'DDX3:-0.896', w: 198, color: GREEN_T, arrow: 'down', aw: 18 },
      ]}
    />
    <DdxChart />
    <div className="h-[2px]" />
    <DateAxis />
    <Banner />
    <div className="mt-[17px] h-[17px] border-t-2 border-[#dcdcdc]" />
    <BottomNav />
  </div>
);

export default App;
